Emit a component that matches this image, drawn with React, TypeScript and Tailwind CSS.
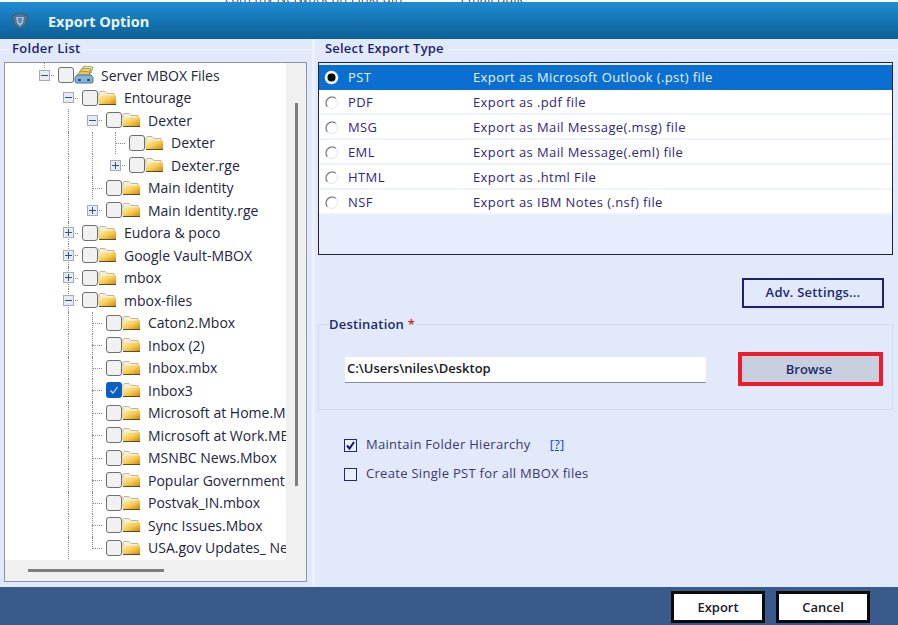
import React from "react";

type Row = { level: number; label: string; exp?: "-" | "+"; guides: number[]; checked?: boolean; server?: boolean };

const rows: Row[] = [
  { level: 0, label: "Server MBOX Files", exp: "-", guides: [], server: true },
  { level: 1, label: "Entourage", exp: "-", guides: [] },
  { level: 2, label: "Dexter", exp: "-", guides: [68] },
  { level: 3, label: "Dexter", guides: [68, 92, 115] },
  { level: 3, label: "Dexter.rge", exp: "+", guides: [68, 92] },
  { level: 2, label: "Main Identity", guides: [68, 92] },
  { level: 2, label: "Main Identity.rge", exp: "+", guides: [68] },
  { level: 1, label: "Eudora & poco", exp: "+", guides: [68] },
  { level: 1, label: "Google Vault-MBOX", exp: "+", guides: [68] },
  { level: 1, label: "mbox", exp: "+", guides: [68] },
  { level: 1, label: "mbox-files", exp: "-", guides: [68] },
  { level: 2, label: "Caton2.Mbox", guides: [68, 92] },
  { level: 2, label: "Inbox (2)", guides: [68, 92] },
  { level: 2, label: "Inbox.mbx", guides: [68, 92] },
  { level: 2, label: "Inbox3", guides: [68, 92], checked: true },
  { level: 2, label: "Microsoft at Home.Mbox", guides: [68, 92] },
  { level: 2, label: "Microsoft at Work.MBOX", guides: [68, 92] },
  { level: 2, label: "MSNBC News.Mbox", guides: [68, 92] },
  { level: 2, label: "Popular Government", guides: [68, 92] },
  { level: 2, label: "Postvak_IN.mbox", guides: [68, 92] },
  { level: 2, label: "Sync Issues.Mbox", guides: [68, 92] },
  { level: 2, label: "USA.gov Updates_ Newsletter", guides: [68, 92] },
];

const exportTypes = [
  ["PST", "Export as Microsoft Outlook (.pst) file"],
  ["PDF", "Export as .pdf file"],
  ["MSG", "Export as Mail Message(.msg) file"],
  ["EML", "Export as Mail Message(.eml) file"],
  ["HTML", "Export as .html File"],
  ["NSF", "Export as IBM Notes (.nsf) file"],
];

function Folder() {
  return (
    <svg width="19" height="16" viewBox="0 0 19 16" className="shrink-0">
      <defs>
        <linearGradient id="fold" x1="0" y1="0" x2="1" y2="1">
          <stop offset="0" stopColor="#ffedb0" />
          <stop offset="0.5" stopColor="#f7cb50" />
          <stop offset="1" stopColor="#cf8410" />
        </linearGradient>
      </defs>
      <path d="M1 13V2.5L2 1.5h5l2 2h7V6" fill="#f2efdc" stroke="#bdb892" strokeWidth="1" />
      <path d="M1 5.5h17v9H1z" fill="url(#fold)" />
      <path d="M1 14.5h17" stroke="#5d4c1c" strokeWidth="1" />
    </svg>
  );
}

function ServerIcon() {
  return (
    <svg width="20" height="20" viewBox="0 0 20 20" className="shrink-0 -mt-[3px]">
      <path d="M7 8L10 2l9 1-2 6z" fill="#f7e6a8" stroke="#8c8450" strokeWidth="0.7" />
      <path d="M5 10l3-6 9 1-2 6z" fill="#f2d474" stroke="#8c7a30" strokeWidth="0.7" />
      <path d="M3 12l3-5 10 1-1 5z" fill="#eec355" stroke="#8c7a30" strokeWidth="0.7" />
      <path d="M1 13.5L3 11h14l2 2.5v4a1.5 1.5 0 0 1-1.5 1.5h-15A1.5 1.5 0 0 1 1 17.5z" fill="#7fb4dd" stroke="#2d5c8c" strokeWidth="0.8" />
      <rect x="4" y="15" width="3" height="2" rx="1" fill="#1e3f66" />
      <rect x="13" y="15" width="3" height="2" rx="1" fill="#1e3f66" />
    </svg>
  );
}

function Expander({ kind }: { kind: "-" | "+" }) {
  return (
    <span className="w-[11px] h-[11px] border border-[#a3abbb] bg-[#e9ebf3] flex items-center justify-center relative shrink-0">
      <span className="w-[7px] h-px bg-[#2f4f8f]" />
      {kind === "+" && <span className="absolute w-px h-[7px] bg-[#2f4f8f]" />}
    </span>
  );
}

function Radio({ on }: { on: boolean }) {
  return (
    <svg width="15" height="15" viewBox="0 0 15 15" className={on ? "-mt-[2px]" : "-mt-px"}>
      {on ? (
        <>
          <circle cx="7.5" cy="7.5" r="6.8" fill="#f4f6fa" />
          <circle cx="7.5" cy="7.5" r="4" fill="#000" />
        </>
      ) : (
        <>
          <circle cx="7.5" cy="7.5" r="6" fill="#fff" stroke="#e3e3e3" strokeWidth="1" />
          <path d="M11.7 3.3A6 6 0 0 0 3.3 11.7" fill="none" stroke="#777" strokeWidth="1.3" />
        </>
      )}
    </svg>
  );
}

function TreeRow({ r, last }: { r: Row; last: boolean }) {
  const expX = [44, 68, 92, 115][r.level];
  const cbX = [58, 82, 106, 129][r.level];
  return (
    <div className="relative h-[22.5px] flex items-center">
      {r.guides.map((g) => (
        <span
          key={g}
          className={`absolute top-0 w-0 border-l border-dotted border-[#8a8a8a] ${last && g === 92 ? "h-[12px]" : "h-full"}`}
          style={{ left: `${g - 6}px` }}
        />
      ))}
      {r.level === 0 && (
        <span className="absolute top-[-4px] h-[8px] w-0 border-l border-dotted border-[#8a8a8a]" style={{ left: `${expX - 6}px` }} />
      )}
      <span
        className="absolute top-1/2 w-[10px] border-t border-dotted border-[#8a8a8a]"
        style={{ left: `${expX - 6}px` }}
      />
      {r.exp && (
        <span className="absolute" style={{ left: `${expX - 11}px` }}>
          <Expander kind={r.exp} />
        </span>
      )}
      <div className="flex items-center" style={{ marginLeft: `${cbX - 6}px` }}>
        {r.checked ? (
          <span className="w-[16px] h-[16px] rounded-[3px] bg-[#0a5fc0] flex items-center justify-center shrink-0">
            <svg width="10" height="10" viewBox="0 0 10 10" fill="none" stroke="#cfe3fb" strokeWidth="1.2">
              <path d="M1.5 5.5L4 8l4.5-6" />
            </svg>
          </span>
        ) : (
          <span className="w-[16px] h-[16px] rounded-[3px] border border-[#6f6f6f] bg-[#f1f1f1] shrink-0" />
        )}
        {r.server ? <ServerIcon /> : <Folder />}
        <span className="ml-[7px] text-[14px] text-[#24243c] whitespace-nowrap">{r.label}</span>
      </div>
    </div>
  );
}

export default function App() {
  return (
    <div className="w-[898px] h-[625px] flex flex-col overflow-hidden bg-[#e1e9fb] font-['Open_Sans','Liberation_Sans',sans-serif]">
      <div className="h-[2px] bg-white shrink-0 overflow-hidden flex text-[13px] leading-[14px] text-[#555] whitespace-nowrap">
        <span className="ml-[225px] -mt-[9px]">com my Network on LinkedIn</span>
        <span className="ml-[58px] -mt-[9px]">Email Bulk</span>
      </div>
      <header className="h-[37px] shrink-0 flex items-center bg-gradient-to-b from-[#1f8dd3] to-[#0b5f96]">
        <svg width="22" height="20" viewBox="0 0 22 20" className="ml-[9px]">
          <path d="M3 5l8-3 8 3-2 8-6 5-6-5z" fill="#4f7596" stroke="#3a5f80" />
          <path d="M7 6h8l-1 6-3 3-3-3z" fill="#a9bed2" />
          <path d="M9 7h4l-.5 4L11 12.500 9.500 11z" fill="#5c7f9e" />
        </svg>
        <span className="ml-[17px] mt-[2px] text-[14.5px] font-bold text-[#eaf4fb]">Export Option</span>
      </header>

      <main className="flex-1 flex min-h-0">
        <section className="w-[315px] shrink-0 border-r-[3px] border-[#edf1fa] pl-[4px] pr-[5px] flex flex-col">
          <div className="h-[23px] -ml-[4px] -mr-[5px] flex items-start">
            <span className="w-[12px] h-px mt-[10px] bg-[#edf1fa]" />
            <h2 className="text-[13px] leading-[19px] font-semibold tracking-[0.3px] text-[#1f1f70]">Folder List</h2>
            <span className="flex-1 h-px mt-[10px] ml-[3px] bg-[#edf1fa]" />
          </div>
          <div className="h-[520px] border border-[#8a93ad] bg-[#f0f0f0] flex flex-col">
            <div className="flex flex-1 min-h-0">
              <div className="w-[281px] bg-white overflow-hidden pl-px pt-[1px]">
                {rows.map((r, i) => (
                  <TreeRow key={i} r={r} last={i === rows.length - 1} />
                ))}
              </div>
              <div className="flex-1 pt-[40px] flex justify-center">
                <div className="w-[3px] h-[383px] bg-[#7d7d7d]" />
              </div>
            </div>
            <div className="h-[21px] pl-[23px] flex items-center">
              <div className="w-[136px] h-[3px] bg-[#7d7d7d]" />
            </div>
          </div>
        </section>

        <section className="flex-1 pl-[3px] pr-[5px] flex flex-col">
          <div className="h-[23px] -mr-[5px] flex items-start">
            <h2 className="ml-[7px] text-[13px] leading-[19px] font-semibold tracking-[0.2px] text-[#1f1f70]">Select Export Type</h2>
            <span className="flex-1 h-px mt-[10px] ml-[4px] bg-[#edf1fa]" />
          </div>
          <div className="h-[193px] border border-[#20242e] bg-[#e6edfc] pt-[2px]">
            {exportTypes.map(([k, d], i) => (
              <div
                key={k}
                className={`h-[25px] flex items-center text-[13px] tracking-[0.4px] ${i === 0 ? "pt-[1px] bg-[#0a6fd0] text-[#e8f2fd]" : "pt-[2px] bg-white text-[#33267a] border-b-2 border-[#eef3fd]"}`}
              >
                <span className="w-[29px] pl-[5px] flex items-center">
                  <Radio on={i === 0} />
                </span>
                <span className="w-[125px]">{k}</span>
                <span>{d}</span>
              </div>
            ))}
          </div>

          <div className="mt-[23px] flex justify-end pr-[9px]">
            <button className="w-[142px] h-[30px] border-2 border-[#1d2270] bg-[#e1e9fb] text-[13px] font-semibold tracking-[0.2px] text-[#1f2a6b]">
              Adv. Settings...
            </button>
          </div>

          <div className="mt-[16px] relative h-[86px] border border-[#d5dcec] flex items-center">
            <span className="absolute left-[9px] -top-[10px] bg-[#e1e9fb] px-px text-[13px] leading-[18px] font-semibold tracking-[0.2px] text-[#1f2a6b]">
              Destination <span className="text-[#d4202a]">*</span>
            </span>
            <div className="ml-[26px] w-[361px] h-[26px] mt-[6px] bg-white border-b border-[#8a8a8a] flex items-center pl-[2px] pb-[2px] text-[13px] font-semibold text-[#1a1a1a]">
              C:\Users\niles\Desktop
            </div>
            <button className="ml-[32px] w-[145px] h-[34px] mt-[4px] pt-[2px] border-[4px] border-[#ec1c2d] bg-[#c8d0e0] text-[13px] font-semibold text-[#1f2a6b] pr-[3px]">
              Browse
            </button>
          </div>

          <div className="mt-[24px] ml-[26px] flex items-center h-[22px] text-[13px] tracking-[0.3px] text-[#3b3a70]">
            <span className="w-[13px] h-[13px] border border-[#1f2a6b] bg-[#e8eefc] flex items-center justify-center">
              <svg width="11" height="11" viewBox="0 0 11 11" fill="none" stroke="#12185a" strokeWidth="2">
                <path d="M2 5.500L4.500 8.500 9 2" />
              </svg>
            </span>
            <span className="ml-[9px]">Maintain Folder Hierarchy</span>
            <span className="ml-[19px] text-[#1a3fd0] underline">[?]</span>
          </div>
          <div className="mt-[7px] ml-[26px] flex items-center h-[22px] text-[13px] tracking-[0.3px] text-[#3b3a70]">
            <span className="w-[13px] h-[13px] border border-[#1f2a6b] bg-[#e8eefc]" />
            <span className="ml-[9px]">Create Single PST for all MBOX files</span>
          </div>
        </section>
      </main>

      <footer className="h-[38px] shrink-0 bg-[#3a5a8c] pt-[4px] flex items-start justify-end gap-[11px] pr-[28px]">
        <button className="w-[94px] h-[32px] pt-[1px] border-[3px] border-[#0a0a0a] bg-white text-[13px] font-semibold text-[#1a1a2a]">Export</button>
        <button className="w-[94px] h-[32px] pt-[1px] border-[3px] border-[#0a0a0a] bg-white text-[13px] font-semibold text-[#1a1a2a]">Cancel</button>
      </footer>
    </div>
  );
}
